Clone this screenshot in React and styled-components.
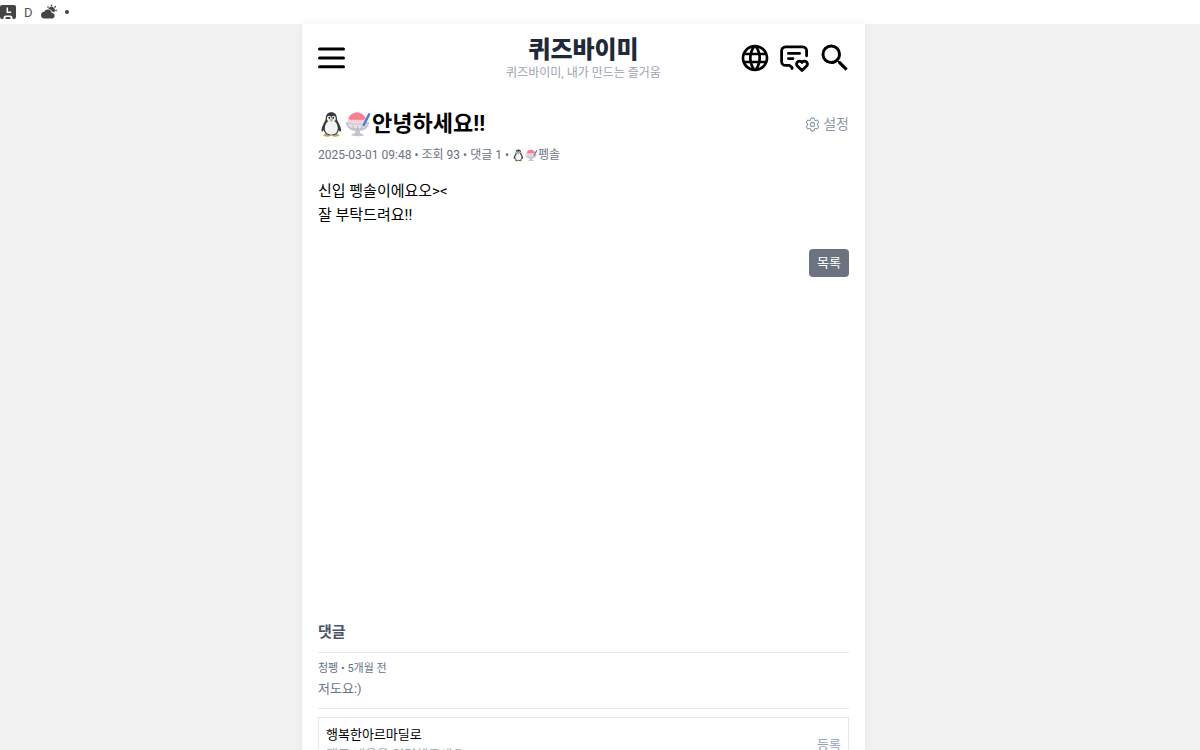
import React from "react";
import styled, { createGlobalStyle } from "styled-components";
import { MdLanguage, MdSearch } from "react-icons/md";
import { HiOutlineCog6Tooth } from "react-icons/hi2";

const MenuIcon = () => (
  <svg width="28" height="28" viewBox="0 0 28 28" aria-hidden="true">
    <path
      d="M1.5 5h24M1.5 14h24M1.5 22.8h24"
      stroke="#000"
      strokeWidth="3"
      strokeLinecap="round"
    />
  </svg>
);

const MessageHeartIcon = () => (
  <svg
    width="32"
    height="32"
    viewBox="0 0 32 32"
    fill="none"
    stroke="#000"
    strokeWidth="2.8"
    strokeLinecap="round"
    strokeLinejoin="round"
    aria-hidden="true"
  >
    <path d="M14 26.5v-1.2l-2.7-1.9H7.6a4 4 0 0 1-4-4V8.8a4 4 0 0 1 4-4h17a4 4 0 0 1 4 4v5" />
    <path d="M10.4 11.4h11.2M10.4 16.6h4.6" />
    <path d="M24 28.6l4.6-4.5a2.9 2.9 0 0 0 0-4.1 3 3 0 0 0-4.2 0l-.4.4-.4-.4a3 3 0 0 0-4.2 0 2.9 2.9 0 0 0 0 4.1z" />
  </svg>
);

const StationIcon = () => (
  <svg width="16" height="16" viewBox="0 0 16 16" aria-hidden="true">
    <path d="M2 1h12q2 0 2 2v10q0 2-2 2h-1.5v-1q0-2.5-2.5-2.5H6Q3.500 11.500 3.500 14v1H2q-2 0-2-2V3q0-2 2-2z" fill="#444" />
    <path d="M7.3 3.500v4.700h3.900" fill="none" stroke="#fff" strokeWidth="1.500" />
    <path d="M5.500 15V14q0-1 1-1h3q1 0 1 1v1z" fill="#444" />
  </svg>
);

const WeatherIcon = () => (
  <svg width="16" height="16" viewBox="0 0 16 16" fill="#444" aria-hidden="true">
    <path
      d="M10.500.8v1.600M6.500 2.500l1.100 1.100M14.700 2.300l-1.200 1.200M14.300 6.500h1.500"
      stroke="#444"
      strokeWidth="1.400"
    />
    <path d="M7.300 5a3.400 3.400 0 1 1 5.800 3.300c-.5-.3-1-.5-1.600-.6A4.900 4.900 0 0 0 7.300 5z" />
    <path d="M3.700 14.500a3.400 3.400 0 0 1-.5-6.800 4 4 0 0 1 7.600 1.300h.6a2.800 2.800 0 0 1 0 5.500z" />
  </svg>
);

const Penguin = () => (
  <Emoji viewBox="0 0 28 28" role="img" aria-label="펭귄">
    <ellipse cx="9.5" cy="25" rx="3.800" ry="1.700" fill="#c4a25c" />
    <ellipse cx="18" cy="25" rx="3.800" ry="1.700" fill="#c4a25c" />
    <path
      d="M13.800 1.200C10 1.200 8 4 8 7.500c0 2.500-1.600 4.200-3 7.200-1.400 3.200-1.700 6-.9 6.500.7.400 1.400-.6 1.900-1.500.6 3.600 3.500 5.500 7.800 5.500s7.200-1.900 7.800-5.500c.5.900 1.200 1.900 1.900 1.500.8-.5.500-3.300-.9-6.500-1.400-3-3-4.700-3-7.200 0-3.500-2-6.300-5.800-6.300z"
      fill="#35383b"
    />
    <path d="M13.800 9.500c-4.300 0-6.700 4.200-6.700 8.500s2.700 6.500 6.700 6.500 6.700-2.200 6.700-6.500-2.400-8.500-6.700-8.500z" fill="#f3f3f3" />
    <ellipse cx="11.500" cy="7.800" rx="2.300" ry="2.900" fill="#efefef" />
    <ellipse cx="16.100" cy="7.800" rx="2.300" ry="2.900" fill="#efefef" />
    <circle cx="11.800" cy="7" r="1" fill="#222" />
    <circle cx="15.800" cy="7" r="1" fill="#222" />
    <path d="M11.800 8.500h4l-2 2.800z" fill="#c4a25c" />
  </Emoji>
);

const ShavedIce = () => (
  <Emoji viewBox="0 0 28 28" role="img" aria-label="빙수">
    <path d="M2.500 12C2.500 5.500 7 1.500 12.500 1.500s10 4 10 10.500c-5 2.500-15 2.500-20 0z" fill="#fbd3d8" />
    <path d="M3.500 8C5 4 8.300 1.500 12.500 1.500S20 4 21.500 8c-2.500 1.800-5.500 1-9 1s-6.500.8-9-1z" fill="#f77f8f" />
    <path d="M1 11.500q12 3.500 24 0c0 5-3.700 8.700-9.500 9.300V23c2.300.3 4 1 4 2 0 1.600-13 1.600-13 0 0-1 1.700-1.700 4-2v-2.200C4.700 20.200 1 16.500 1 11.500z" fill="#c3c6d1" />
    <path d="M3 13q10 2.500 20 0c-.9 3-3 4.600-5.500 5H8.500C6 17.600 3.900 16 3 13z" fill="#e6e1e9" />
    <path d="M8 15l1.500 4.500M13 15.500V20M18 15l-1.500 4.500" stroke="#adb0bd" strokeWidth="1" />
    <path d="M19.500 14.500L25 3.500" stroke="#4c7fce" strokeWidth="2.600" strokeLinecap="round" />
  </Emoji>
);

const App = () => {
  const [comment, setComment] = React.useState("");

  return (
    <>
      <GlobalStyle />
      <StatusBar>
        <StationIcon />
        <span>D</span>
        <WeatherIcon />
        <Dot />
      </StatusBar>
      <Page>
        <Container>
          <Header>
            <HeaderSide>
              <IconButton type="button" aria-label="메뉴">
                <MenuIcon />
              </IconButton>
            </HeaderSide>
            <Brand href="#">
              <Logo>퀴즈바이미</Logo>
              <Tagline>퀴즈바이미, 내가 만드는 즐거움</Tagline>
            </Brand>
            <HeaderSide $end>
              <IconButton type="button" aria-label="언어">
                <MdLanguage size={32} />
              </IconButton>
              <IconButton type="button" aria-label="메시지">
                <MessageHeartIcon />
              </IconButton>
              <IconButton type="button" aria-label="검색">
                <MdSearch size={36} />
              </IconButton>
            </HeaderSide>
          </Header>

          <main>
            <TitleRow>
              <Title>
                <Penguin />
                <ShavedIce />
                안녕하세요!!
              </Title>
              <SettingButton type="button">
                <HiOutlineCog6Tooth size={17} />
                설정
              </SettingButton>
            </TitleRow>
            <Meta>
              <span>2025-03-01 09:48</span>
              <span>•</span>
              <span>조회 93</span>
              <span>•</span>
              <span>댓글 1</span>
              <span>•</span>
              <Author>
                <Penguin />
                <ShavedIce />
                펭솔
              </Author>
            </Meta>
            <Content>
              <p>신입 펭솔이에요오&gt;&lt;</p>
              <p>잘 부탁드려요!!</p>
            </Content>
            <Actions>
              <ListButton type="button">목록</ListButton>
            </Actions>
            <Banner />

            <section>
              <CommentTitle>댓글</CommentTitle>
              <Comment>
                <CommentMeta>청펭 • 5개월 전</CommentMeta>
                <p>저도요:)</p>
              </Comment>
              <CommentForm onSubmit={(e) => e.preventDefault()}>
                <Field>
                  <label htmlFor="comment">행복한아르마딜로</label>
                  <textarea
                    id="comment"
                    rows="2"
                    placeholder="댓글 내용을 입력해주세요."
                    value={comment}
                    onChange={(e) => setComment(e.target.value)}
                  />
                </Field>
                <SubmitButton type="submit">등록</SubmitButton>
              </CommentForm>
            </section>
          </main>
        </Container>
      </Page>
    </>
  );
};

const GlobalStyle = createGlobalStyle`
  * {
    box-sizing: border-box;
  }
  html {
    scrollbar-width: none;
  }
  body {
    margin: 0;
    background: #fff;
    color: #000;
    font-family: Roboto, "Noto Sans CJK KR", sans-serif;
  }
  h1, h2, p {
    margin: 0;
  }
  button, textarea {
    padding: 0;
    border: none;
    background: transparent;
    font-family: inherit;
  }
  button {
    cursor: pointer;
  }
  svg {
    display: block;
    flex-shrink: 0;
  }
`;

const StatusBar = styled.div`
  display: flex;
  align-items: center;
  gap: 8px;
  height: 24px;
  font-size: 13px;
  color: #555;
`;

const Dot = styled.i`
  width: 4px;
  height: 4px;
  border-radius: 50%;
  background: #444;
`;

const Page = styled.div`
  min-height: calc(100vh - 24px);
  padding-right: 33px;
  background: #f2f2f2;
`;

const Container = styled.div`
  max-width: 563px;
  min-height: calc(100vh - 24px);
  margin: 0 auto;
  padding: 0 16px 24px;
  background: #fff;
  box-shadow: 0 0 10px rgba(0, 0, 0, 0.06);
`;

const Header = styled.header`
  display: flex;
  align-items: center;
  height: 68px;
`;

const HeaderSide = styled.div`
  display: flex;
  flex: 1;
  align-items: center;
  justify-content: ${(props) => (props.$end ? "flex-end" : "flex-start")};
  gap: 7px;
`;

const IconButton = styled.button`
  display: flex;
  color: #000;
  ${HeaderSide} > &:last-child:not(:first-child) {
    margin-right: -4px;
  }
`;

const Brand = styled.a`
  text-align: center;
  text-decoration: none;
`;

const Logo = styled.div`
  font-size: 24px;
  font-weight: 900;
  line-height: 30px;
  color: #1f2937;
`;

const Tagline = styled.div`
  font-size: 12px;
  line-height: 16px;
  color: #9ca3af;
`;

const Emoji = styled.svg`
  width: 1em;
  height: 1em;
`;

const TitleRow = styled.div`
  display: flex;
  align-items: center;
  justify-content: space-between;
  margin-top: 16px;
`;

const Title = styled.h1`
  display: flex;
  align-items: center;
  font-size: 22px;
  font-weight: 700;
  line-height: 32px;
  ${Emoji} {
    width: 27px;
    height: 27px;
  }
`;

const SettingButton = styled.button`
  display: flex;
  align-items: center;
  gap: 2px;
  font-size: 14px;
  line-height: 24px;
  color: #8b98aa;
`;

const Meta = styled.div`
  display: flex;
  align-items: center;
  gap: 3px;
  margin-top: 7px;
  font-size: 12px;
  line-height: 16px;
  color: #6b7280;
`;

const Author = styled.span`
  display: flex;
  align-items: center;
  ${Emoji} {
    width: 13px;
    height: 13px;
  }
`;

const Content = styled.div`
  margin-top: 16px;
  font-size: 15px;
  line-height: 24px;
`;

const Actions = styled.div`
  display: flex;
  justify-content: flex-end;
  margin-top: 22px;
`;

const ListButton = styled.button`
  height: 28px;
  padding: 0 8px;
  border-radius: 4px;
  background: #6b7280;
  font-size: 13px;
  line-height: 20px;
  color: #fff;
`;

const Banner = styled.aside`
  height: 343px;
`;

const CommentTitle = styled.h2`
  padding-bottom: 8px;
  border-bottom: 1px solid #e5e7eb;
  font-size: 15px;
  font-weight: 700;
  line-height: 24px;
  color: #475569;
`;

const Comment = styled.article`
  padding: 7px 0;
  border-bottom: 1px solid #e5e7eb;
  font-size: 13px;
  line-height: 24px;
  color: #64748b;
`;

const CommentMeta = styled.div`
  font-size: 11px;
  line-height: 17px;
`;

const CommentForm = styled.form`
  display: flex;
  align-items: center;
  gap: 8px;
  margin-top: 8px;
  padding: 7px;
  border: 1px solid #e5e7eb;
`;

const Field = styled.div`
  flex: 1;
  label {
    display: block;
    font-size: 13px;
    line-height: 20px;
  }
  textarea {
    display: block;
    width: 100%;
    outline: none;
    resize: none;
    font-size: 13px;
    line-height: 20px;
    color: #000;
  }
  textarea::placeholder {
    color: #9ca3af;
  }
`;

const SubmitButton = styled.button`
  align-self: flex-start;
  padding: 8px 0;
  font-size: 13px;
  line-height: 24px;
  color: #94a3b8;
`;

export default App;
